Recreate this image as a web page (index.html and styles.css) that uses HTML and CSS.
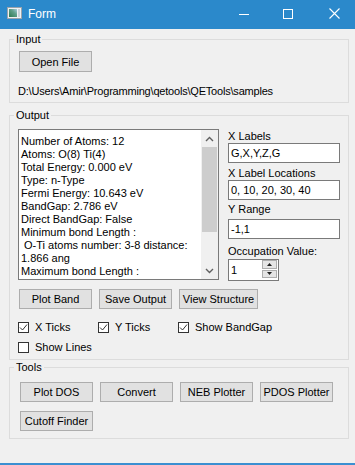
FILE: index.html
```html
<!DOCTYPE html>
<html>
<head>
<meta charset="utf-8">
<title>Form</title>
<link rel="stylesheet" href="styles.css">
</head>
<body>
<div class="window">
  <div class="titlebar">
    <svg class="appicon" width="15" height="12" viewBox="0 0 15 12">
      <defs>
        <linearGradient id="ig" x1="0" y1="1" x2="1" y2="0">
          <stop offset="0" stop-color="#2e7a52"/>
          <stop offset="0.6" stop-color="#5f9f8a"/>
          <stop offset="1" stop-color="#a9cde0"/>
        </linearGradient>
      </defs>
      <rect x="0.5" y="0.5" width="14" height="11" fill="#eef1f3" stroke="#9aa3ab"/>
      <rect x="2" y="2" width="8" height="8" fill="url(#ig)"/>
      <rect x="11" y="2" width="2" height="8" fill="#c9d2d9"/>
    </svg>
    <span class="title">Form</span>
    <div class="controls">
      <span class="ctl"><svg width="10" height="10" viewBox="0 0 10 10"><path d="M0 5.5H10" stroke="#fff" stroke-width="1"/></svg></span>
      <span class="ctl"><svg width="10" height="10" viewBox="0 0 10 10"><rect x="0.5" y="0.5" width="9" height="9" fill="none" stroke="#fff" stroke-width="1"/></svg></span>
      <span class="ctl ctl-close"><svg width="11" height="11" viewBox="0 0 11 11"><path d="M0.5 0.5L10.5 10.5M10.5 0.5L0.5 10.5" stroke="#fff" stroke-width="1.1"/></svg></span>
    </div>
  </div>

  <div class="client">
    <fieldset class="group g-input">
      <legend>Input</legend>
      <div class="body">
        <button class="btn btn-open">Open File</button>
        <div class="path">D:\Users\Amir\Programming\qetools\QETools\samples</div>
      </div>
    </fieldset>

    <fieldset class="group g-output">
      <legend>Output</legend>
      <div class="body">
        <div class="out-row">
          <div class="textbox">
            <div class="tb-text">Number of Atoms: 12
Atoms: O(8) Ti(4)
Total Energy: 0.000 eV
Type: n-Type
Fermi Energy: 10.643 eV
BandGap: 2.786 eV
Direct BandGap: False
Minimum bond Length :
 O-Ti atoms number: 3-8 distance:
1.866 ang
Maximum bond Length :</div>
            <div class="vscroll">
              <span class="arrow"><svg width="9" height="6" viewBox="0 0 9 6"><path d="M1 5L4.5 1.5L8 5" fill="none" stroke="#606060" stroke-width="1.4"/></svg></span>
              <span class="thumb"></span>
              <span class="track"></span>
              <span class="arrow"><svg width="9" height="6" viewBox="0 0 9 6"><path d="M1 1L4.5 4.5L8 1" fill="none" stroke="#606060" stroke-width="1.4"/></svg></span>
            </div>
          </div>
          <div class="side">
            <span class="lbl">X Labels</span>
            <div class="field">G,X,Y,Z,G</div>
            <span class="lbl lbl2">X Label Locations</span>
            <div class="field">0, 10, 20, 30, 40</div>
            <span class="lbl lbl3">Y Range</span>
            <div class="field f3">-1,1</div>
            <span class="lbl lbl4">Occupation Value:</span>
            <div class="spin">
              <span class="spin-val">1</span>
              <span class="spin-btns">
                <span class="spin-btn"><svg width="5" height="3" viewBox="0 0 5 3"><polygon points="0,3 2.5,0 5,3" fill="#202020"/></svg></span>
                <span class="spin-btn"><svg width="5" height="3" viewBox="0 0 5 3"><polygon points="0,0 5,0 2.5,3" fill="#202020"/></svg></span>
              </span>
            </div>
          </div>
        </div>
        <div class="btnrow">
          <button class="btn">Plot Band</button>
          <button class="btn">Save Output</button>
          <button class="btn btn-wide">View Structure</button>
        </div>
        <div class="checks">
          <label class="check"><span class="box"><svg width="9" height="9" viewBox="0 0 9 9"><path d="M1 4.5L3.5 7L8 1.5" fill="none" stroke="#333" stroke-width="1"/></svg></span>X Ticks</label>
          <label class="check"><span class="box"><svg width="9" height="9" viewBox="0 0 9 9"><path d="M1 4.5L3.5 7L8 1.5" fill="none" stroke="#333" stroke-width="1"/></svg></span>Y Ticks</label>
          <label class="check"><span class="box"><svg width="9" height="9" viewBox="0 0 9 9"><path d="M1 4.5L3.5 7L8 1.5" fill="none" stroke="#333" stroke-width="1"/></svg></span>Show BandGap</label>
          <label class="check"><span class="box"></span>Show Lines</label>
        </div>
      </div>
    </fieldset>

    <fieldset class="group g-tools">
      <legend>Tools</legend>
      <div class="body">
        <div class="toolgrid">
          <button class="btn">Plot DOS</button>
          <button class="btn">Convert</button>
          <button class="btn">NEB Plotter</button>
          <button class="btn">PDOS Plotter</button>
          <button class="btn">Cutoff Finder</button>
        </div>
      </div>
    </fieldset>
  </div>
</div>
</body>
</html>
```

FILE: styles.css
```css
* { box-sizing: border-box; }
html, body { margin: 0; padding: 0; }
body {
  background: #f0f0f0;
  font-family: "Liberation Sans", Arial, sans-serif;
  font-size: 11px;
  color: #000;
}
.window {
  height: 465px;
  display: flex;
  flex-direction: column;
  border-bottom: 2px solid #3b8fd1;
  overflow: hidden;
}
.titlebar {
  height: 29px;
  flex: none;
  background: #2b89cb;
  color: #fff;
  display: flex;
  align-items: center;
  padding-bottom: 2px;
}
.appicon { margin-left: 7px; margin-top: -1px; flex: none; }
.title { margin-left: 6px; font-size: 12px; }
.controls { margin-left: auto; display: flex; height: 100%; margin-right: -3px; }
.ctl { width: 44px; display: flex; align-items: center; justify-content: center; }
.ctl-close { width: 48px; }

.client { flex: 1; padding: 3px 6px 0 9px; }

.group {
  margin: 0;
  padding: 0;
  min-width: 0;
  border: 1px solid #dcdcdc;
}
.group legend {
  padding: 0 2px;
  margin-left: 4px;
  line-height: 14px;
  font-size: 11px;
}
.g-input .body { padding: 5px 9px 3px 9px; }
.g-output { margin-top: 5px; }
.g-output .body { padding: 7px 8px 5px 8px; }
.g-tools .body { padding: 8px 10px 7px 10px; }

.btn {
  display: block;
  width: 73px;
  height: 20px;
  padding: 0;
  margin: 0;
  background: #e1e1e1;
  border: 1px solid #adadad;
  font: inherit;
  color: #000;
  line-height: 18px;
  text-align: center;
  white-space: nowrap;
}
.btn-open { height: 21px; }
.btn-wide { width: 79px; }

.path {
  margin-top: 12px;
  margin-left: -1px;
  line-height: 15px;
  white-space: nowrap;
  letter-spacing: -0.2px;
}

.out-row { display: flex; align-items: flex-start; }
.textbox {
  width: 201px;
  height: 151px;
  border: 1px solid #7a7a7a;
  background: #fff;
  display: flex;
  flex: none;
}
.tb-text {
  flex: 1;
  padding: 5px 0 0 2px;
  line-height: 13px;
  white-space: pre;
  overflow: hidden;
}
.vscroll {
  width: 17px;
  flex: none;
  background: #f0f0f0;
  display: flex;
  flex-direction: column;
}
.arrow { height: 17px; flex: none; display: flex; align-items: center; justify-content: center; }
.thumb { height: 85px; flex: none; margin: 0 1px; background: #cdcdcd; }
.track { flex: 1; }

.side { margin-left: 9px; width: 113px; display: flex; flex-direction: column; }
.lbl { display: block; line-height: 14px; white-space: nowrap; }
.lbl2 { margin-top: 3px; }
.lbl3 { margin-top: 2px; }
.lbl4 { margin-top: 5px; }
.field {
  height: 20px;
  border: 1px solid #7a7a7a;
  background: #fff;
  padding-left: 2px;
  line-height: 18px;
  white-space: nowrap;
}
.f3 { margin-top: 3px; }
.spin {
  margin-top: 1px;
  width: 51px;
  height: 22px;
  border: 1px solid #7a7a7a;
  background: #fff;
  display: flex;
}
.spin-val { flex: 1; padding-left: 2px; line-height: 20px; }
.spin-btns {
  width: 16px;
  display: flex;
  flex-direction: column;
  gap: 1px;
  padding: 0 1px 2px 0;
}
.spin-btn {
  flex: 1;
  background: #e5e5e5;
  border: 1px solid #adadad;
  display: flex;
  align-items: center;
  justify-content: center;
}

.btnrow { display: flex; gap: 7px; margin-top: 8px; margin-left: 1px; }

.checks {
  margin-top: 11px;
  display: grid;
  grid-template-columns: 80px 80px auto;
  row-gap: 6px;
}
.check {
  display: flex;
  align-items: center;
  gap: 6px;
  height: 14px;
  line-height: 14px;
  white-space: nowrap;
}
.box {
  width: 11px;
  height: 11px;
  flex: none;
  border: 1px solid #333;
  background: #fff;
  display: flex;
  align-items: center;
  justify-content: center;
}

.toolgrid {
  display: grid;
  grid-template-columns: repeat(4, 73px);
  gap: 9px 7px;
}
```
